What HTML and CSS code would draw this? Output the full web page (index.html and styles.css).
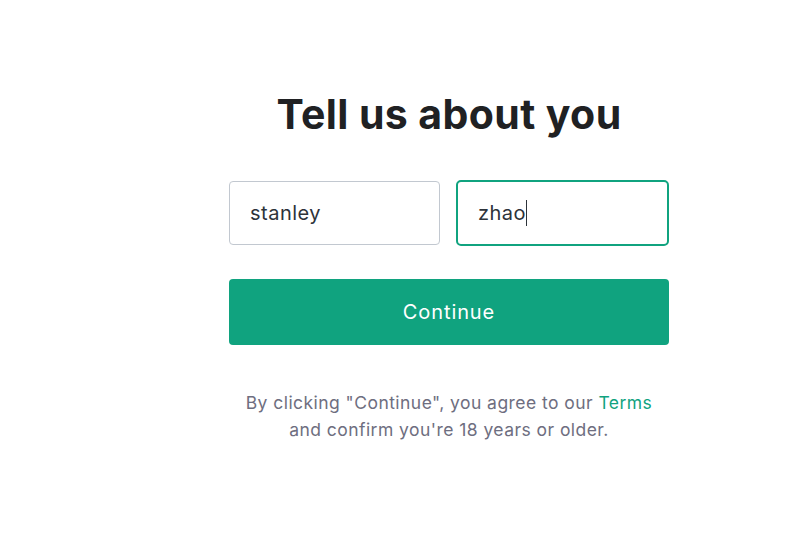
FILE: index.html
```html
<!DOCTYPE html>
<html>
<head>
<meta charset="utf-8">
<link rel="stylesheet" href="styles.css">
</head>
<body>
<main class="page">
  <section class="card">
    <h1 class="title">Tell us about you</h1>
    <div class="row">
      <div class="field">stanley</div>
      <div class="field focused">zhao<span class="caret"></span></div>
    </div>
    <button class="btn">Continue</button>
    <p class="terms">By clicking "Continue", you agree to our <a class="link">Terms</a><br>and confirm you're 18 years or older.</p>
  </section>
</main>
</body>
</html>
```
FILE: styles.css
```css
html, body { margin: 0; padding: 0; background: #fff; }
body { font-family: Inter, "Noto Sans", sans-serif; color: #202123; }
.page { padding-top: 88px; padding-left: 229px; }
.card { width: 440px; display: flex; flex-direction: column; }
.title { margin: 0; text-align: center; font-size: 41px; font-weight: 700; line-height: 52px; letter-spacing: 0.4px; color: #202123; }
.row { display: flex; gap: 16px; margin-top: 41px; }
.field { flex: 1; height: 64px; box-sizing: border-box; border: 1px solid #c2c8d0; border-radius: 4px; display: flex; align-items: center; padding-left: 20px; font-size: 20px; letter-spacing: 0.5px; color: #2d333a; }
.field.focused { border: 2px solid #10a37f; padding-left: 20px; margin-top: -1px; margin-bottom: -1px; height: 66px; border-radius: 5px; }
.caret { display: inline-block; width: 1px; height: 26px; background: #2d333a; margin-left: 0; }
.btn { margin-top: 34px; height: 66px; border: 0; border-radius: 4px; background: #10a37f; color: #fff; font-family: inherit; font-size: 20px; letter-spacing: 0.9px; }
.terms { margin: 44px 0 0; text-align: center; font-size: 17.5px; line-height: 27px; letter-spacing: 0.45px; color: #6e6e80; }
.link { color: #10a37f; }
```
